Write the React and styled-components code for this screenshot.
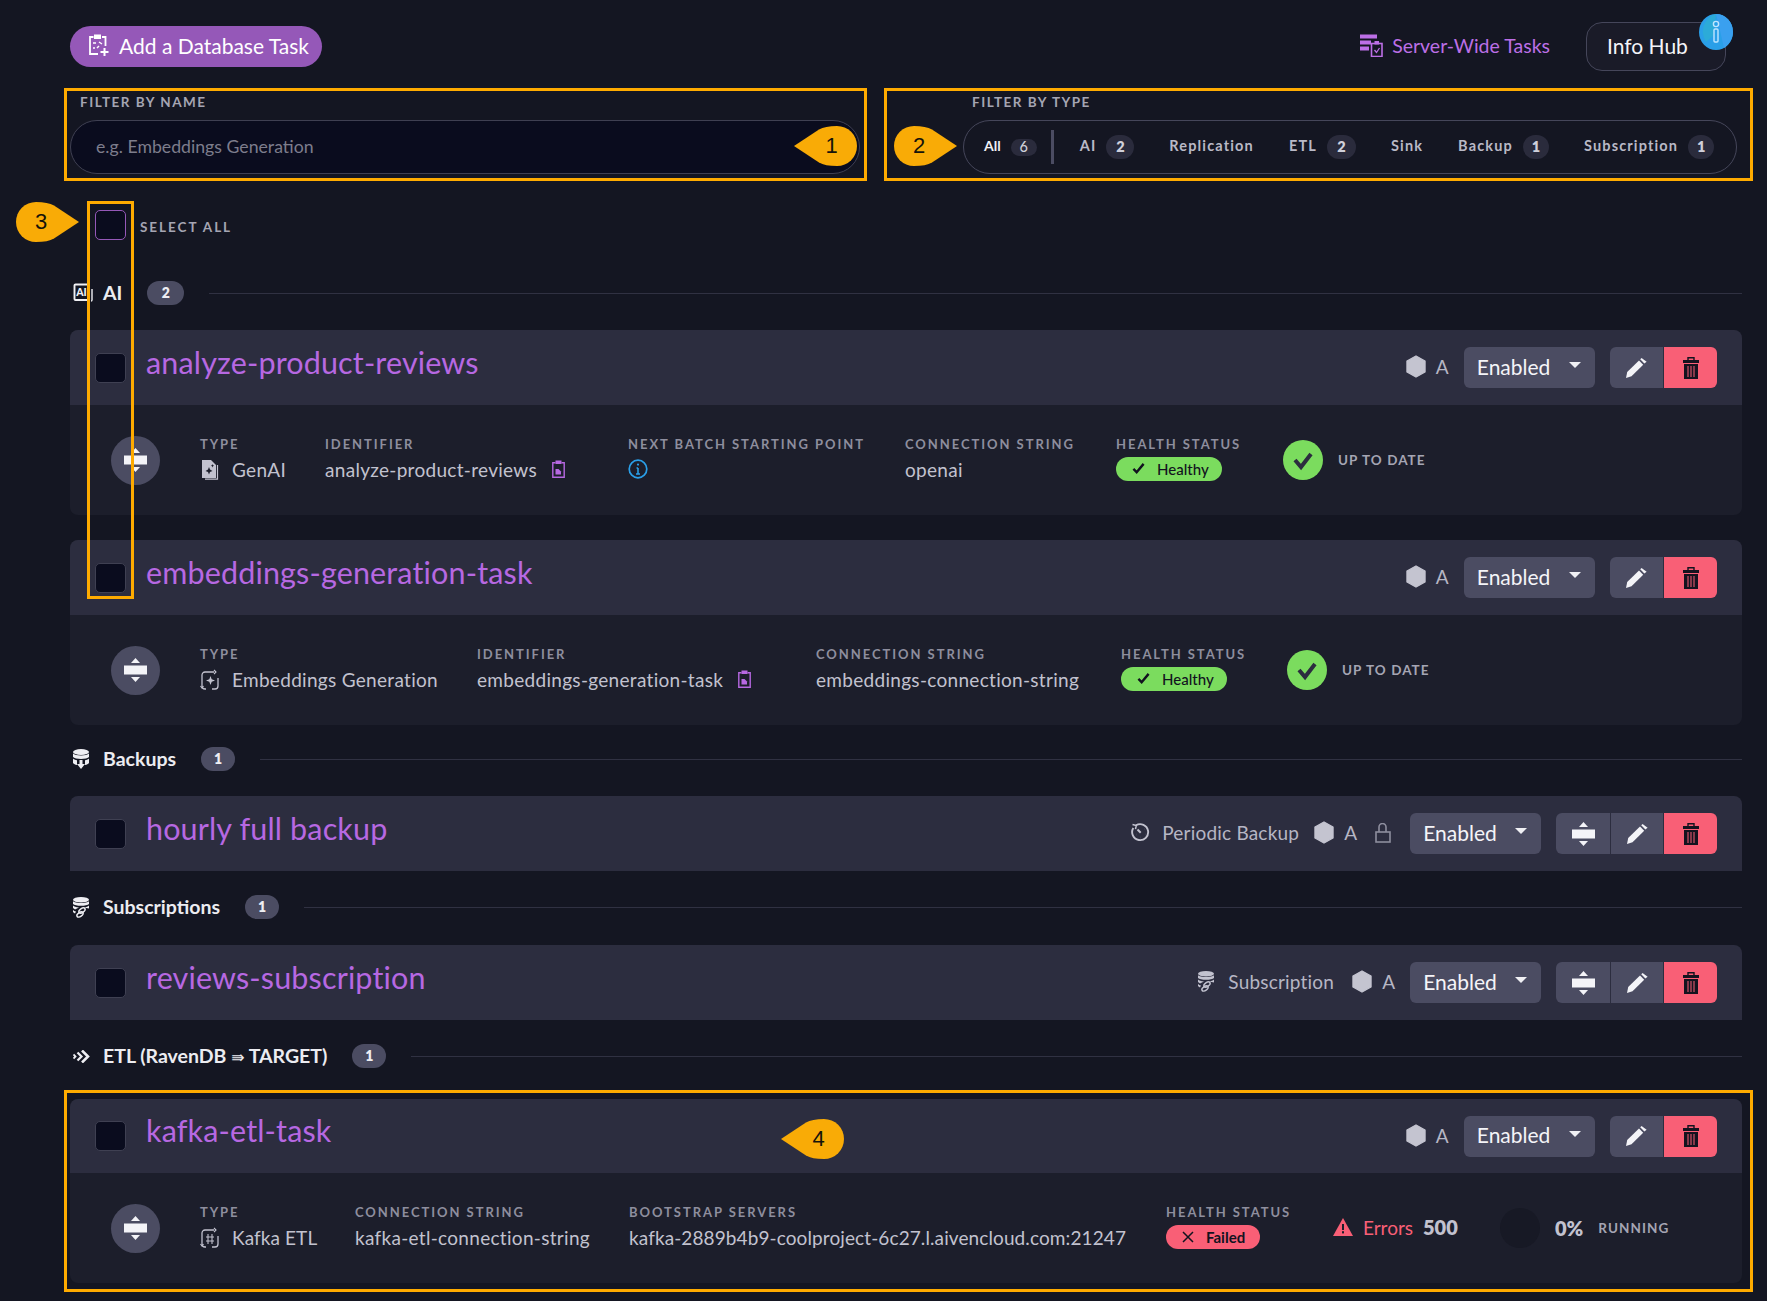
import React from "react";
import styled, { createGlobalStyle } from "styled-components";

const FONT = `Lato, "Noto Sans", sans-serif`;

const Global = createGlobalStyle`
  html, body { margin: 0; padding: 0; background: #141622; }
  body { font-family: ${FONT}; color: #c2c2cf; }
  * { box-sizing: border-box; }
  input::placeholder { color: #7d7d8c; opacity: 1; }
`;

const Page = styled.div`
  position: relative;
  width: 1767px;
  height: 1301px;
  padding: 22px 25px 0 70px;
  overflow: hidden;
`;

const TopBar = styled.div`
  display: flex;
  align-items: center;
  justify-content: space-between;
  height: 49px;
`;

const AddButton = styled.div`
  display: flex;
  align-items: center;
  gap: 10px;
  width: 252px;
  height: 41px;
  padding: 0 0 3px 18px;
  border-radius: 21px;
  background: #9558b8;
  color: #fff;
  font-size: 21px;
`;

const TopRight = styled.div`
  display: flex;
  align-items: center;
  margin-right: 16px;
`;

const ServerLink = styled.div`
  display: flex;
  align-items: center;
  gap: 9px;
  color: #bc6fe6;
  font-size: 19.5px;
  margin-right: 36px;
  padding-bottom: 3px;
`;

const InfoHub = styled.div`
  position: relative;
  width: 140px;
  height: 49px;
  padding: 0 0 3px 20px;
  display: flex;
  align-items: center;
  border: 1px solid #45465a;
  border-radius: 16px;
  background: #1a1b28;
  color: #f4f4f8;
  font-size: 21px;
`;

const InfoBadge = styled.svg`
  position: absolute;
  right: -8px;
  top: -9px;
`;

const FilterRow = styled.div`
  display: flex;
  justify-content: space-between;
  margin-top: 24px;
  padding-right: 5px;
`;

const FilterCol = styled.div`
  width: ${p => p.$w}px;
`;

const FilterLabel = styled.div`
  height: 15px;
  line-height: 15px;
  margin: 0 0 10px ${p => p.$indent}px;
  font-size: 13.5px;
  font-weight: 700;
  letter-spacing: 1.5px;
  color: #a5a5b3;
`;

const NameInput = styled.input`
  display: block;
  width: 100%;
  height: 54px;
  padding: 0 0 2px 25px;
  border: 1px solid #3f4052;
  border-radius: 27px;
  background: #0a0c1e;
  color: #c2c2cf;
  font-family: ${FONT};
  font-size: 17.7px;
  outline: none;
`;

const TypePill = styled.div`
  display: flex;
  align-items: center;
  height: 54px;
  padding-left: 20px;
  border: 1px solid #45465a;
  border-radius: 27px;
  gap: 35px;
`;

const TypeItem = styled.div`
  display: flex;
  align-items: center;
  gap: 10px;
  font-size: 14.5px;
  font-weight: 700;
  letter-spacing: 1.15px;
  color: #b9b9c6;
`;

const AllItem = styled(TypeItem)`
  color: #f0f0f4;
  letter-spacing: 0;
  font-size: 14px;
`;

const ItemText = styled.span`
  padding-bottom: 3px;
`;

const CountChip = styled.span`
  display: inline-flex;
  align-items: center;
  justify-content: center;
  width: ${p => p.$w || 27}px;
  height: ${p => p.$h || 24}px;
  padding-bottom: 1px;
  border-radius: 12px;
  background: #2a2b3c;
  color: #d0d0da;
  font-size: 14.5px;
  letter-spacing: 0;
  font-weight: ${p => p.$light ? 500 : 800};
`;

const Divider = styled.span`
  width: 3px;
  height: 34px;
  background: #4b4c62;
  margin: 0 -9px 0 -21px;
`;

const SelectAllRow = styled.div`
  display: flex;
  align-items: center;
  gap: 14px;
  margin-top: 36px;
  padding-left: 25px;
  height: 30px;
`;

const Check = styled.div`
  width: 31px;
  height: 30px;
  flex: none;
  border-radius: 5px;
  background: #0a0c1e;
  border: 1px solid ${p => p.$accent ? "#9558b8" : "#3f4052"};
`;

const SmallCaps = styled.span`
  font-size: 13.5px;
  font-weight: 700;
  letter-spacing: 1.05px;
  color: #a5a5b3;
`;

const SelectAllText = styled(SmallCaps)`
  letter-spacing: 1.95px;
  padding-top: 4px;
`;

const GroupRow = styled.div`
  display: flex;
  align-items: center;
  height: 24px;
  margin-top: ${p => p.$top}px;
  margin-bottom: ${p => p.$bottom}px;
`;

const GroupIcon = styled.span`
  display: flex;
  width: 33px;
  padding-left: 3px;
  flex: none;
`;

const GroupTitle = styled.span`
  padding-bottom: 2px;
  font-size: 19.5px;
  font-weight: 700;
  color: #ececf1;
`;

const ThinArrow = styled.span`
  font-family: "DejaVu Sans", sans-serif;
  font-weight: 400;
  font-size: 16px;
`;

const GroupCount = styled.span`
  display: inline-flex;
  align-items: center;
  justify-content: center;
  width: ${p => p.$w || 34}px;
  height: 24px;
  margin: 0 25px;
  padding-bottom: 2px;
  border-radius: 12px;
  background: #4b4c62;
  color: #eeeef3;
  font-size: 14px;
  font-weight: 800;
`;

const GroupLine = styled.span`
  flex: 1;
  height: 1px;
  background: #303142;
`;

const Card = styled.div`
  margin-bottom: ${p => p.$bottom || 0}px;
  border-radius: 8px 8px ${p => p.$plain ? "0 0" : "8px 8px"};
  overflow: hidden;
  background: #1c1e2b;
`;

const CardHeader = styled.div`
  display: flex;
  align-items: center;
  height: ${p => p.$h || 75}px;
  padding: 0 25px;
  background: #2c2d3f;
`;

const Title = styled.div`
  flex: 1;
  margin: 0 0 12px 20px;
  font-size: 30.5px;
  color: #b768e2;
  letter-spacing: 0.15px;
`;

const Meta = styled.div`
  display: flex;
  align-items: center;
  margin: 0 ${p => p.$mr || 15}px 2px 0;
  gap: ${p => p.$gap || 10}px;
  font-size: 19px;
  letter-spacing: 0.2px;
  color: #b6b6c4;
`;

const SelectBox = styled.div`
  display: flex;
  align-items: center;
  justify-content: space-between;
  width: 131px;
  height: 41px;
  padding: 0 14px 3px 13px;
  border-radius: 6px;
  background: #4b4c62;
  color: #f4f4f8;
  font-size: 21px;
`;

const Caret = styled.span`
  width: 0;
  height: 0;
  margin-bottom: 2px;
  border-left: 6px solid transparent;
  border-right: 6px solid transparent;
  border-top: 6px solid #f0f0f4;
`;

const ButtonGroup = styled.div`
  display: flex;
  margin-left: 15px;
  border-radius: 6px;
  overflow: hidden;
`;

const IconButton = styled.div`
  display: flex;
  align-items: center;
  justify-content: center;
  width: 53.6px;
  height: 41px;
  background: ${p => p.$danger ? "#f95f76" : "#4b4c62"};
  border-left: ${p => p.$first ? "none" : "1px solid #2c2d3f"};
`;

const CardBody = styled.div`
  display: flex;
  align-items: center;
  height: 110px;
  padding-left: 41px;
`;

const ExpandCircle = styled.div`
  display: flex;
  align-items: center;
  justify-content: center;
  width: 49px;
  height: 49px;
  margin-right: 40px;
  flex: none;
  border-radius: 50%;
  background: #4b4c62;
`;

const Col = styled.div`
  width: ${p => p.$w}px;
  flex: none;
  height: 48px;
`;

const ColLabel = styled.div`
  height: 16px;
  line-height: 16px;
  margin-bottom: 5px;
  font-size: 13px;
  font-weight: 700;
  letter-spacing: 1.95px;
  color: #8e8e9e;
  white-space: nowrap;
`;

const ColValue = styled.div`
  display: flex;
  align-items: center;
  height: 24px;
  font-size: 19px;
  letter-spacing: ${p => p.$tight ? 0.1 : 0.3}px;
  color: #c2c2cf;
  white-space: nowrap;
`;

const TypeIcon = styled.span`
  display: flex;
  justify-content: center;
  width: 20px;
  margin-right: 12px;
`;

const CopyIcon = styled.svg`
  margin-left: 15px;
`;

const StatusPill = styled.div`
  display: inline-flex;
  align-items: center;
  gap: 12px;
  width: ${p => p.$failed ? 94 : 106}px;
  height: 24px;
  padding: 0 0 1px 16px;
  border-radius: 12px;
  background: ${p => p.$failed ? "#f95f76" : "#7bdc5e"};
  color: #12131f;
  font-size: 15px;
  font-weight: ${p => p.$failed ? 700 : 500};
`;

const StatusRow = styled.div`
  display: flex;
  align-items: center;
  gap: ${p => p.$gap || 15}px;
`;

const ErrorBlock = styled.div`
  display: flex;
  align-items: center;
  width: 167px;
  flex: none;
  gap: 10px;
  color: #f95f76;
  font-size: 19px;
  padding-bottom: 2px;
`;

const ErrorCount = styled.b`
  color: #c2c2cf;
  font-size: 20px;
  font-weight: 800;
`;

const DarkDot = styled.div`
  width: 40px;
  height: 40px;
  border-radius: 50%;
  background: #171925;
`;

const Percent = styled.b`
  font-size: 20px;
  font-weight: 800;
  color: #c2c2cf;
`;

const Frame = styled.div`
  position: absolute;
  left: ${p => p.$x}px;
  top: ${p => p.$y}px;
  width: ${p => p.$w}px;
  height: ${p => p.$h}px;
  border: 3px solid #ffab00;
  pointer-events: none;
`;

const MarkerWrap = styled.div`
  position: absolute;
  left: ${p => p.$x}px;
  top: ${p => p.$y}px;
  width: 63px;
  height: 40px;
  display: flex;
  align-items: center;
  justify-content: center;
  padding-left: ${p => p.$right ? 0 : 12}px;
  padding-right: ${p => p.$right ? 13 : 0}px;
  color: #15130a;
  font-family: "Liberation Sans", Arial, sans-serif;
  font-size: 22px;
`;

const MarkerShape = styled.svg`
  position: absolute;
  inset: 0;
  transform: ${p => p.$right ? "scaleX(-1)" : "none"};
`;

const MarkerNum = styled.span`
  position: relative;
`;

const Marker = ({ x, y, n, right }) => (
  <MarkerWrap $x={x} $y={y} $right={right}>
    <MarkerShape $right={right} width="63" height="40" viewBox="0 0 63 40">
      <path d="M0 20 L25 3.5 Q31 0 43 0 A20 20 0 0 1 43 40 Q31 40 25 36.5 Z" fill="#f9ab06" />
    </MarkerShape>
    <MarkerNum>{n}</MarkerNum>
  </MarkerWrap>
);

const ClipPlus = () => (
  <svg width="21" height="24" viewBox="0 0 21 24" fill="none" stroke="#fff" strokeWidth="1.8">
    <path d="M5.5 4H2v17h8" />
    <path d="M14 4h3.5v9" />
    <rect x="6" y="1.5" width="7" height="4.5" fill="#fff" stroke="none" />
    <path d="M5 10h3M11 9l3 2M5 15h2M9 15l2-2" strokeWidth="1.5" />
    <path d="M16.5 15v8M12.5 19h8" strokeWidth="2" />
  </svg>
);

const ServerIcon = () => (
  <svg width="23" height="23" viewBox="0 0 23 23" fill="none" stroke="#bc6fe6" strokeWidth="1.6">
    <rect x="0" y="0.5" width="17" height="4" fill="#bc6fe6" stroke="none" />
    <rect x="0" y="6.5" width="11" height="4" fill="#bc6fe6" stroke="none" />
    <rect x="0" y="12.5" width="9" height="4" fill="#bc6fe6" stroke="none" />
    <rect x="11.5" y="9.5" width="10.5" height="13" />
    <rect x="14.5" y="7" width="4.5" height="3.5" fill="#bc6fe6" stroke="none" />
    <path d="M14.5 16l2 2.5 3-4.5" strokeWidth="1.3" />
  </svg>
);

const InfoDrop = () => (
  <InfoBadge width="34" height="36" viewBox="0 0 34 36">
    <ellipse cx="17" cy="18" rx="17" ry="18" fill="#2a9fe8" />
    <path d="M17 0A17 18 0 0 1 34 18C34 24 30 31 25 34L20 12Z" fill="#3aa0ef" />
    <path d="M7 28A17 18 0 0 1 17 0L14 22Z" fill="#2cabd8" />
    <circle cx="17" cy="10" r="2.6" fill="none" stroke="#bfe6ff" strokeWidth="1.4" />
    <rect x="15" y="15" width="4" height="13" rx="1" fill="none" stroke="#bfe6ff" strokeWidth="1.4" />
  </InfoBadge>
);

const AiIcon = () => (
  <svg width="20" height="20" viewBox="0 0 20 20" fill="none">
    <path d="M16 15.5V2.5A1 1 0 0 0 15 1.5H2.5A1 1 0 0 0 1.5 2.5V16A1 1 0 0 0 2.5 17H14" stroke="#f0f0f4" strokeWidth="1.9" />
    <text x="3.2" y="13.4" fontFamily="Lato, sans-serif" fontWeight="900" fontSize="10.5" fill="#f0f0f4">AI</text>
    <path d="M19 6v11a1 1 0 0 1-1 1" stroke="#f0f0f4" strokeWidth="1.4" />
  </svg>
);

const DbBackup = () => (
  <svg width="16" height="20" viewBox="0 0 16 20" fill="#eeeef3">
    <ellipse cx="8" cy="3" rx="8" ry="3" />
    <path d="M0 4.5C2 7 14 7 16 4.5V8C14 10.5 2 10.5 0 8Z" />
    <path d="M0 9.5c1 1 2 1.4 4 1.8V16c-2-.4-3-1-4-2ZM16 9.5c-1 1-2 1.4-4 1.8V16c2-.4 3-1 4-2Z" />
    <path d="M6.5 11h3v4h2.5L8 20l-4-5h2.5Z" />
  </svg>
);

const DbSub = ({ color = "#eeeef3" }) => (
  <svg width="16" height="21" viewBox="0 0 16 21" fill={color}>
    <ellipse cx="8" cy="2.8" rx="8" ry="2.8" />
    <path d="M0 4.2C2 6.6 14 6.6 16 4.2V7C14 9.4 2 9.4 0 7Z" />
    <path d="M0 8.5C1 9.6 3 10.2 6 10.4L2 12.5 0 11ZM16 8.5c-1 1.1-3 1.7-5 1.9L16 11.5Z" />
    <path d="M0 13c1 1 1.5 1.2 3 1.6l-1 2C1 16 .5 15.5 0 15Z" />
    <g fill="none" stroke={color} strokeWidth="1.4">
      <ellipse cx="9" cy="13.5" rx="3.5" ry="2" transform="rotate(-35 9 13.5)" />
      <ellipse cx="7" cy="17.5" rx="3.5" ry="2" transform="rotate(-35 7 17.5)" />
    </g>
  </svg>
);

const EtlIcon = () => (
  <svg width="17" height="13" viewBox="0 0 17 13" fill="none" stroke="#eeeef3">
    <path d="M0.5 4.5l2 2-2 2" strokeWidth="1.8" />
    <path d="M4.5 2.5l4 4-4 4" strokeWidth="2.2" />
    <path d="M9 0.5l6 6-6 6" strokeWidth="2.6" />
  </svg>
);

const Hexagon = () => (
  <svg width="20" height="23" viewBox="0 0 20 23" fill="#c4c4d0" stroke="#c4c4d0" strokeWidth="1.4" strokeLinejoin="round">
    <polygon points="10,1 19,6 19,17 10,22 1,17 1,6" />
  </svg>
);

const LockOpen = () => (
  <svg width="16" height="20" viewBox="0 0 16 20" fill="none" stroke="#8e8e9e" strokeWidth="1.6">
    <rect x="1" y="9" width="14" height="10" />
    <path d="M4 9V4a3.5 3.5 0 0 1 7 0v5" />
  </svg>
);

const Clockish = () => (
  <svg width="19" height="19" viewBox="0 0 19 19" fill="none" stroke="#c2c2cf" strokeWidth="1.9">
    <path d="M5 2.3A8 8 0 1 1 2.3 5" />
    <path d="M1.5 1.5l3.8 1L4.5 6.2" strokeWidth="1.5" />
    <path d="M6.5 6.5l3.2 3.2" strokeWidth="2" />
    <path d="M5 11.5h.1M14 11.5h.1M13 6h.1M9.5 14.5h.1" strokeWidth="2" />
  </svg>
);

const ExpandGlyph = () => (
  <svg width="23" height="24" viewBox="0 0 23 24" fill="#f4f4f8">
    <polygon points="11.5,0 7,5 16,5" />
    <rect x="0" y="7.5" width="23" height="9" />
    <polygon points="7,19 16,19 11.5,24" />
  </svg>
);

const Pencil = () => (
  <svg width="21" height="20" viewBox="0 0 21 20" fill="#f4f4f8">
    <polygon points="0,20 1.2,14 13,2.5 17.2,6.7 5.5,18.3" />
    <polygon points="14.2,1.2 15.6,0 20.6,3.8 18.4,5.5" />
  </svg>
);

const Trash = () => (
  <svg width="16" height="22" viewBox="0 0 16 22">
    <path d="M5 3V0.7H11V3" fill="none" stroke="#14131f" strokeWidth="1.4" />
    <rect x="0" y="3" width="16" height="3" fill="#14131f" />
    <rect x="1" y="7" width="14" height="15" fill="#14131f" />
    <path d="M5 9v11M8 9v11M11 9v11" stroke="#f95f76" strokeWidth="1" />
  </svg>
);

const Actions = ({ expand }) => (
  <ButtonGroup>
    {expand && <IconButton $first><ExpandGlyph /></IconButton>}
    <IconButton $first={!expand}><Pencil /></IconButton>
    <IconButton $danger><Trash /></IconButton>
  </ButtonGroup>
);

const Head = ({ title, meta, expand, h }) => (
  <CardHeader $h={h}>
    <Check />
    <Title>{title}</Title>
    {meta}
    <SelectBox>Enabled<Caret /></SelectBox>
    <Actions expand={expand} />
  </CardHeader>
);

const NodeTag = ({ mr }) => (
  <Meta $mr={mr}><Hexagon />A</Meta>
);

const GenAiIcon = () => (
  <svg width="18" height="21" viewBox="0 0 18 21">
    <path d="M1 1h9l5 5v13H1Z" fill="#c2c2cf" />
    <path d="M16.5 6v14.2H4" fill="none" stroke="#c2c2cf" strokeWidth="1.2" />
    <path d="M8 8l1 2.5L11.5 12 9 13l-1 2.5L7 13 4.5 12 7 10.5Z" fill="#1c1e2b" />
    <path d="M11.5 5l.5 1.2 1.2.5-1.2.5-.5 1.2-.5-1.2-1.2-.5 1.2-.5Z" fill="#1c1e2b" />
  </svg>
);

const EmbedIcon = () => (
  <svg width="20" height="21" viewBox="0 0 20 21" fill="none" stroke="#c2c2cf" strokeWidth="1.3">
    <path d="M14 3H5a3 3 0 0 0-3 3v11a3 3 0 0 0 3 3h1" />
    <path d="M18 9v8a3 3 0 0 1-3 3h-3" />
    <path d="M10.5 7l1.2 3.3L15 11.5l-3.3 1.2L10.5 16l-1.2-3.3L6 11.5l3.3-1.2Z" fill="#c2c2cf" stroke="none" />
    <path d="M14 1l2 2-2 2M0.5 17l1.5 2 1.5-2" strokeWidth="1.1" />
  </svg>
);

const KafkaIcon = () => (
  <svg width="20" height="21" viewBox="0 0 20 21" fill="none" stroke="#c2c2cf" strokeWidth="1.3">
    <path d="M14 3H5a3 3 0 0 0-3 3v11a3 3 0 0 0 3 3h1" />
    <path d="M18 9v8a3 3 0 0 1-3 3h-3" />
    <path d="M8 7v10M12 7v10M6 10h8M6 14h8" strokeWidth="1.1" />
    <path d="M14 1l2 2-2 2M0.5 17l1.5 2 1.5-2" strokeWidth="1.1" />
  </svg>
);

const Copy = () => (
  <CopyIcon width="13" height="18" viewBox="0 0 13 18" fill="none" stroke="#b768e2" strokeWidth="1.4">
    <path d="M3.5 2.7H.8v14.5h11.4V2.7H9.5" />
    <rect x="3.5" y="0.5" width="6" height="3.5" fill="#b768e2" stroke="none" />
    <path d="M3.5 9v5.5h5.5v-3L6.5 9Z" fill="#b768e2" stroke="none" />
  </CopyIcon>
);

const InfoCircle = () => (
  <svg width="20" height="20" viewBox="0 0 20 20" fill="none" stroke="#2a9fe8" strokeWidth="1.7">
    <circle cx="10" cy="10" r="8.8" />
    <path d="M10 9v6M8 15h4M8.5 9H10" strokeWidth="1.6" />
    <circle cx="10" cy="5.6" r="1.1" fill="#2a9fe8" stroke="none" />
  </svg>
);

const TickBold = ({ size = 14, color = "#12131f" }) => (
  <svg width={size} height={size} viewBox="0 0 14 14" fill="none" stroke={color} strokeWidth="2.6">
    <path d="M1.5 7.5l3.5 3.5 7.5-9" />
  </svg>
);

const GreenDisc = () => (
  <svg width="40" height="40" viewBox="0 0 40 40">
    <circle cx="20" cy="20" r="20" fill="#7bdc5e" />
    <path d="M12 20l6 7 10-13" fill="none" stroke="#2c2d3f" strokeWidth="4" />
  </svg>
);

const Cross = () => (
  <svg width="12" height="12" viewBox="0 0 12 12" stroke="#12131f" strokeWidth="1.5">
    <path d="M1 1l10 10M11 1L1 11" />
  </svg>
);

const Warn = () => (
  <svg width="20" height="18" viewBox="0 0 20 18">
    <path d="M10 0l10 18H0Z" fill="#f95f76" />
    <rect x="9" y="6" width="2" height="6" fill="#1c1e2b" />
    <rect x="9" y="13.2" width="2" height="2.2" fill="#1c1e2b" />
  </svg>
);

const HealthCol = ({ w, failed }) => (
  <Col $w={w}>
    <ColLabel>HEALTH STATUS</ColLabel>
    <StatusPill $failed={failed}>
      {failed ? <Cross /> : <TickBold size={13} />}
      {failed ? "Failed" : "Healthy"}
    </StatusPill>
  </Col>
);

const UpToDate = () => (
  <StatusRow>
    <GreenDisc />
    <SmallCaps>UP TO DATE</SmallCaps>
  </StatusRow>
);

const TypeOption = ({ label, count, w }) => (
  <TypeItem>
    <ItemText>{label}</ItemText>
    {count && <CountChip $w={w}>{count}</CountChip>}
  </TypeItem>
);

export default function App() {
  return (
    <Page>
      <Global />
      <TopBar>
        <AddButton><ClipPlus />Add a Database Task</AddButton>
        <TopRight>
          <ServerLink><ServerIcon />Server-Wide Tasks</ServerLink>
          <InfoHub>Info Hub<InfoDrop /></InfoHub>
        </TopRight>
      </TopBar>

      <FilterRow>
        <FilterCol $w={790}>
          <FilterLabel $indent={10}>FILTER BY NAME</FilterLabel>
          <NameInput placeholder="e.g. Embeddings Generation" />
        </FilterCol>
        <FilterCol $w={774}>
          <FilterLabel $indent={9}>FILTER BY TYPE</FilterLabel>
          <TypePill>
            <AllItem><ItemText>All</ItemText><CountChip $w={26} $h={17} $light>6</CountChip></AllItem>
            <Divider />
            <TypeOption label="AI" count="2" w={28} />
            <TypeOption label="Replication" />
            <TypeOption label="ETL" count="2" w={29} />
            <TypeOption label="Sink" />
            <TypeOption label="Backup" count="1" w={26} />
            <TypeOption label="Subscription" count="1" w={26} />
          </TypePill>
        </FilterCol>
      </FilterRow>

      <SelectAllRow>
        <Check $accent />
        <SelectAllText>SELECT ALL</SelectAllText>
      </SelectAllRow>

      <GroupRow $top={41} $bottom={25}>
        <GroupIcon><AiIcon /></GroupIcon>
        <GroupTitle>AI</GroupTitle>
        <GroupCount $w={37}>2</GroupCount>
        <GroupLine />
      </GroupRow>

      <Card $bottom={25}>
        <Head title="analyze-product-reviews" meta={<NodeTag />} />
        <CardBody>
          <ExpandCircle><ExpandGlyph /></ExpandCircle>
          <Col $w={125}>
            <ColLabel>TYPE</ColLabel>
            <ColValue><TypeIcon><GenAiIcon /></TypeIcon>GenAI</ColValue>
          </Col>
          <Col $w={303}>
            <ColLabel>IDENTIFIER</ColLabel>
            <ColValue>analyze-product-reviews<Copy /></ColValue>
          </Col>
          <Col $w={277}>
            <ColLabel>NEXT BATCH STARTING POINT</ColLabel>
            <ColValue><InfoCircle /></ColValue>
          </Col>
          <Col $w={211}>
            <ColLabel>CONNECTION STRING</ColLabel>
            <ColValue>openai</ColValue>
          </Col>
          <HealthCol w={167} />
          <UpToDate />
        </CardBody>
      </Card>

      <Card>
        <Head title="embeddings-generation-task" meta={<NodeTag />} />
        <CardBody>
          <ExpandCircle><ExpandGlyph /></ExpandCircle>
          <Col $w={277}>
            <ColLabel>TYPE</ColLabel>
            <ColValue><TypeIcon><EmbedIcon /></TypeIcon>Embeddings Generation</ColValue>
          </Col>
          <Col $w={339}>
            <ColLabel>IDENTIFIER</ColLabel>
            <ColValue>embeddings-generation-task<Copy /></ColValue>
          </Col>
          <Col $w={305}>
            <ColLabel>CONNECTION STRING</ColLabel>
            <ColValue>embeddings-connection-string</ColValue>
          </Col>
          <HealthCol w={166} />
          <UpToDate />
        </CardBody>
      </Card>

      <GroupRow $top={22} $bottom={25}>
        <GroupIcon><DbBackup /></GroupIcon>
        <GroupTitle>Backups</GroupTitle>
        <GroupCount>1</GroupCount>
        <GroupLine />
      </GroupRow>

      <Card $plain>
        <Head
          title="hourly full backup"
          expand
          meta={
            <>
              <Meta $gap={12}><Clockish />Periodic Backup</Meta>
              <NodeTag mr={18} />
              <Meta $mr={19}><LockOpen /></Meta>
            </>
          }
        />
      </Card>

      <GroupRow $top={24} $bottom={26}>
        <GroupIcon><DbSub /></GroupIcon>
        <GroupTitle>Subscriptions</GroupTitle>
        <GroupCount>1</GroupCount>
        <GroupLine />
      </GroupRow>

      <Card $plain>
        <Head
          title="reviews-subscription"
          expand
          meta={
            <>
              <Meta $gap={14} $mr={18}><DbSub color="#c2c2cf" />Subscription</Meta>
              <NodeTag />
            </>
          }
        />
      </Card>

      <GroupRow $top={24} $bottom={31}>
        <GroupIcon><EtlIcon /></GroupIcon>
        <GroupTitle>ETL (RavenDB <ThinArrow>⇛</ThinArrow> TARGET)</GroupTitle>
        <GroupCount>1</GroupCount>
        <GroupLine />
      </GroupRow>

      <Card>
        <Head title="kafka-etl-task" h={74} meta={<NodeTag />} />
        <CardBody>
          <ExpandCircle><ExpandGlyph /></ExpandCircle>
          <Col $w={155}>
            <ColLabel>TYPE</ColLabel>
            <ColValue $tight><TypeIcon><KafkaIcon /></TypeIcon>Kafka ETL</ColValue>
          </Col>
          <Col $w={274}>
            <ColLabel>CONNECTION STRING</ColLabel>
            <ColValue>kafka-etl-connection-string</ColValue>
          </Col>
          <Col $w={537}>
            <ColLabel>BOOTSTRAP SERVERS</ColLabel>
            <ColValue $tight>kafka-2889b4b9-coolproject-6c27.l.aivencloud.com:21247</ColValue>
          </Col>
          <HealthCol w={167} failed />
          <ErrorBlock><Warn />Errors <ErrorCount>500</ErrorCount></ErrorBlock>
          <StatusRow>
            <DarkDot />
            <Percent>0%</Percent>
            <SmallCaps>RUNNING</SmallCaps>
          </StatusRow>
        </CardBody>
      </Card>

      <Frame $x={64} $y={88} $w={803} $h={93} />
      <Frame $x={884} $y={88} $w={869} $h={93} />
      <Frame $x={87} $y={201} $w={47} $h={398} />
      <Frame $x={64} $y={1090} $w={1689} $h={202} />
      <Marker x={794} y={126} n="1" />
      <Marker x={894} y={126} n="2" right />
      <Marker x={16} y={202} n="3" right />
      <Marker x={781} y={1119} n="4" />
    </Page>
  );
}
